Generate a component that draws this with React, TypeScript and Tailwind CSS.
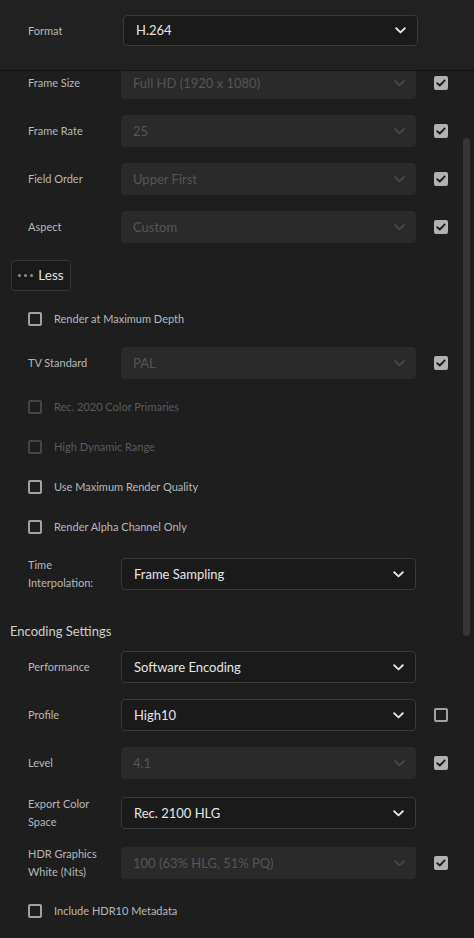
import type { ReactNode } from 'react'

const font = { fontFamily: 'Lato, "Liberation Sans", sans-serif' }

function Chevron({ dim }: { dim?: boolean }) {
  return (
    <svg width="11" height="7" viewBox="0 0 11 7" className="shrink-0">
      <path
        d="M1.2 1.2 L5.5 5.4 L9.8 1.2"
        fill="none"
        stroke={dim ? '#474747' : '#e2e2e2'}
        strokeWidth="1.9"
        strokeLinecap="round"
        strokeLinejoin="round"
      />
    </svg>
  )
}

function Select({ value, disabled }: { value: string; disabled?: boolean }) {
  return (
    <div
      className={[
        'flex h-8 w-[295px] shrink-0 items-center justify-between rounded-[4px] pl-3 pr-[11px] text-[13px]',
        disabled
          ? 'bg-[#2a2a2a] text-[#565656]'
          : 'border border-[#3a3a3a] bg-[#1a1a1a] text-[#e6e6e6]',
      ].join(' ')}
    >
      <span className="pt-px">{value}</span>
      <Chevron dim={disabled} />
    </div>
  )
}

function CheckMark({ checked }: { checked: boolean }) {
  if (!checked) {
    return <div className="ml-[18px] h-[14px] w-[14px] shrink-0 rounded-[2px] border-2 border-[#a2a2a2]" />
  }
  return (
    <div className="ml-[18px] flex h-[14px] w-[14px] shrink-0 items-center justify-center rounded-[2px] bg-[#b2b2b2]">
      <svg width="10" height="8" viewBox="0 0 10 8">
        <path d="M1.3 4.2 L3.8 6.5 L8.7 1.4" fill="none" stroke="#1e1e1e" strokeWidth="1.9" strokeLinecap="round" strokeLinejoin="round" />
      </svg>
    </div>
  )
}

function Row({
  label,
  value,
  disabled,
  check,
  h = 'h-12',
}: {
  label: ReactNode
  value: string
  disabled?: boolean
  check?: boolean
  h?: string
}) {
  return (
    <div className={`flex shrink-0 items-center pl-[28px] ${h}`}>
      <div className="w-[93px] shrink-0 text-[11px] leading-[18px] text-[#b8b8b8]">{label}</div>
      <Select value={value} disabled={disabled} />
      {check !== undefined && <CheckMark checked={check} />}
    </div>
  )
}

function CheckRow({ label, disabled, h = 'h-10' }: { label: string; disabled?: boolean; h?: string }) {
  return (
    <div className={`flex shrink-0 items-center pl-[28px] ${h}`}>
      <div
        className={[
          'h-[14px] w-[14px] shrink-0 rounded-[2px] border-2',
          disabled ? 'border-[#454545]' : 'border-[#a2a2a2]',
        ].join(' ')}
      />
      <span className={['ml-3 pt-px text-[11px]', disabled ? 'text-[#5b5b5b]' : 'text-[#b8b8b8]'].join(' ')}>
        {label}
      </span>
    </div>
  )
}

export default function App() {
  return (
    <div className="flex h-[938px] w-[474px] flex-col overflow-hidden bg-[#1e1e1e]" style={font}>
      {/* Format header */}
      <div className="flex h-[71px] shrink-0 items-start border-b border-[#141414] bg-[#212121] pt-[15px] pl-[28px]">
        <div className="flex h-[31px] w-[95px] items-center pt-px text-[11px] text-[#b8b8b8]">Format</div>
        <div className="flex h-[31px] w-[295px] items-center justify-between rounded-[4px] border border-[#3a3a3a] bg-[#1a1a1a] pl-3 pr-[11px] text-[13px] text-[#e6e6e6]">
          <span className="pt-px">H.264</span>
          <Chevron />
        </div>
      </div>

      <div className="flex min-h-0 flex-1">
        {/* Scrolled settings */}
        <div className="flex min-w-0 flex-1 flex-col overflow-hidden">
          <div className="-mt-3 flex flex-col">
            <Row label="Frame Size" value="Full HD (1920 x 1080)" disabled check />
            <Row label="Frame Rate" value="25" disabled check />
            <Row label="Field Order" value="Upper First" disabled check />
            <Row label="Aspect" value="Custom" disabled check />

            <div className="flex h-12 shrink-0 items-center pl-[11px]">
              <div className="flex h-[31px] w-[60px] items-center justify-center gap-[5px] rounded-[4px] border border-[#363636] bg-[#1a1a1a]">
                <span className="flex gap-[3px]">
                  <span className="h-[3px] w-[3px] rounded-full bg-[#8c8c8c]" />
                  <span className="h-[3px] w-[3px] rounded-full bg-[#8c8c8c]" />
                  <span className="h-[3px] w-[3px] rounded-full bg-[#8c8c8c]" />
                </span>
                <span className="pt-px text-[13.5px] text-[#e0e0e0]">Less</span>
              </div>
            </div>

            <CheckRow label="Render at Maximum Depth" />
            <Row label="TV Standard" value="PAL" disabled check />
            <CheckRow label="Rec. 2020 Color Primaries" disabled />
            <CheckRow label="High Dynamic Range" disabled />
            <CheckRow label="Use Maximum Render Quality" />
            <CheckRow label="Render Alpha Channel Only" />
            <Row label={<>Time<br />Interpolation:</>} value="Frame Sampling" h="h-[54px]" />

            <div className="flex h-[42px] shrink-0 items-end pb-[2px] pl-[10px]">
              <span className="text-[13px] leading-5 text-[#cfcfcf]">Encoding Settings</span>
            </div>

            <Row label="Performance" value="Software Encoding" />
            <Row label="Profile" value="High10" check={false} />
            <Row label="Level" value="4.1" disabled check />
            <Row label={<>Export Color<br />Space</>} value="Rec. 2100 HLG" h="h-[52px]" />
            <Row label={<>HDR Graphics<br />White (Nits)</>} value="100 (63% HLG, 51% PQ)" disabled check />
            <CheckRow label="Include HDR10 Metadata" h="h-12" />
          </div>
        </div>

        {/* Scrollbar */}
        <div className="flex w-[12px] shrink-0 flex-col pl-[1px] pt-[67px]">
          <div className="h-[498px] w-[7px] rounded-full bg-[#363636]" />
        </div>
      </div>
    </div>
  )
}
